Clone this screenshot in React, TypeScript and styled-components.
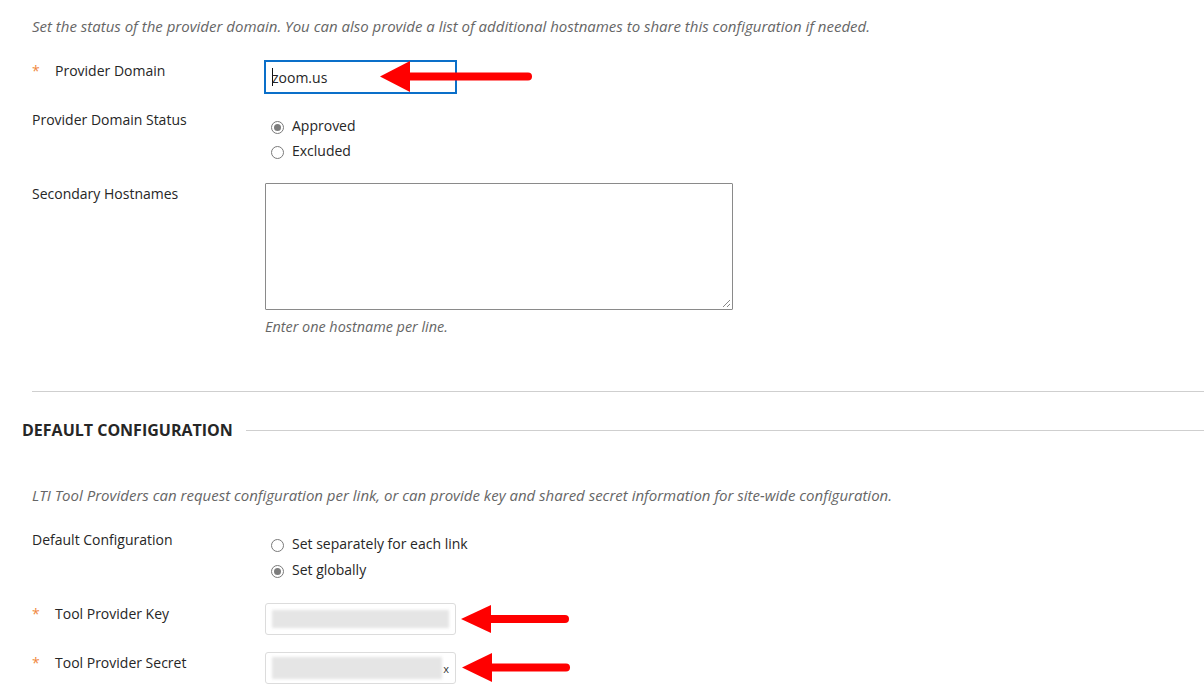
import React from 'react';
import styled, { createGlobalStyle } from 'styled-components';

const GlobalStyle = createGlobalStyle`
  html, body {
    margin: 0;
    padding: 0;
    background: #fff;
  }
  body {
    font-family: 'Open Sans', 'Noto Sans', sans-serif;
    font-size: 14px;
    color: #262626;
  }
`;

const Page = styled.div`
  padding: 16px 0 0 32px;
  width: 1172px;
  overflow: hidden;
`;

const Help = styled.p<{ $top?: number }>`
  margin: ${p => p.$top || 0}px 0 0;
  font-style: italic;
  font-size: 15px;
  line-height: 20px;
  color: #666;
`;

const Row = styled.div<{ $top: number }>`
  display: grid;
  grid-template-columns: 233px 1fr;
  margin-top: ${p => p.$top}px;
`;

const Label = styled.div`
  display: flex;
  line-height: 20px;
  padding-top: 1px;
`;

const Star = styled.span`
  width: 23px;
  color: #f0883e;
`;

const Control = styled.div`
  position: relative;
`;

const Field = styled.div<{ $focused?: boolean }>`
  box-sizing: border-box;
  width: 191px;
  height: 32px;
  border: 1px solid #dcdcdc;
  border-radius: 3px;
  display: flex;
  align-items: center;
  padding: 0 6px;
  ${p =>
    p.$focused &&
    `
    outline: 2px solid #0a6fc9;
    outline-offset: -1px;
    border-radius: 0;
    margin-top: 1px;
  `}
`;

const Caret = styled.span`
  display: inline-block;
  width: 1px;
  height: 18px;
  background: #111;
  margin-right: -1px;
`;

const Value = styled.span`
  color: #262626;
`;

const Blur = styled.span<{ $w: number; $h: number }>`
  display: block;
  width: ${p => p.$w}px;
  height: ${p => p.$h}px;
  background: #e5e5e5;
  filter: blur(1.5px);
`;

const Tail = styled.span`
  font-size: 11px;
  color: #333;
  margin-left: 1px;
`;

const RadioList = styled.div<{ $pad: number; $step: number }>`
  padding-top: ${p => p.$pad}px;
  padding-left: 6px;
  display: flex;
  flex-direction: column;
  & > label {
    height: ${p => p.$step}px;
  }
`;

const RadioItem = styled.label`
  display: flex;
  align-items: center;
  gap: 8px;
  line-height: 20px;
`;

const Dot = styled.span<{ $checked?: boolean }>`
  box-sizing: border-box;
  width: 13px;
  height: 13px;
  border-radius: 50%;
  border: 1px solid #7a7a7a;
  margin-top: 3px;
  display: flex;
  align-items: center;
  justify-content: center;
  &::after {
    content: '';
    width: 7px;
    height: 7px;
    border-radius: 50%;
    background: ${p => (p.$checked ? '#7d7d7d' : 'transparent')};
  }
`;

const TextArea = styled.div`
  position: relative;
  box-sizing: border-box;
  width: 468px;
  height: 127px;
  border: 1px solid #8a8a8a;
  border-radius: 1px;
`;

const Grip = styled.svg`
  position: absolute;
  right: 1px;
  bottom: 1px;
`;

const Hint = styled.div`
  margin-top: 7px;
  font-style: italic;
  font-size: 14.4px;
  line-height: 20px;
  color: #666;
`;

const Rule = styled.hr`
  margin: 54px 0 0;
  border: 0;
  border-top: 1px solid #cfcfcf;
`;

const SectionHead = styled.div`
  display: flex;
  align-items: center;
  gap: 13px;
  margin: 27px 0 0 -10px;
  &::after {
    content: '';
    flex: 1;
    border-top: 1px solid #cfcfcf;
  }
`;

const SectionTitle = styled.h2`
  margin: 0;
  font-size: 16px;
  font-weight: 700;
  line-height: 22px;
  color: #262626;
`;

const ArrowSvg = styled.svg<{ $left: number; $top: number }>`
  position: absolute;
  left: ${p => p.$left}px;
  top: ${p => p.$top}px;
`;

const Arrow = ({ left, top, len, head }: { left: number; top: number; len: number; head: number }) => (
  <ArrowSvg $left={left} $top={top} width={len + 4} height={head + 2}>
    <polygon points={`0,${head / 2 + 1} 30,1 30,${head + 1}`} fill="#ff0000" />
    <line
      x1={28}
      y1={head / 2 + 1}
      x2={len - 2}
      y2={head / 2 + 1}
      stroke="#ff0000"
      strokeWidth={8}
      strokeLinecap="round"
    />
  </ArrowSvg>
);

const Required = ({ children }: { children: React.ReactNode }) => (
  <Label>
    <Star>*</Star>
    {children}
  </Label>
);

const Radio = ({ checked, children }: { checked?: boolean; children: React.ReactNode }) => (
  <RadioItem>
    <Dot $checked={checked} />
    {children}
  </RadioItem>
);

const App = () => (
  <>
    <GlobalStyle />
    <Page>
      <Help>
        Set the status of the provider domain. You can also provide a list of additional hostnames to share this
        configuration if needed.
      </Help>

      <Row $top={24}>
        <Required>Provider Domain</Required>
        <Control>
          <Field $focused>
            <Caret />
            <Value>zoom.us</Value>
          </Field>
          <Arrow left={115} top={0} len={150} head={31} />
        </Control>
      </Row>

      <Row $top={16}>
        <Label>Provider Domain Status</Label>
        <RadioList $pad={4} $step={25}>
          <Radio checked>Approved</Radio>
          <Radio>Excluded</Radio>
        </RadioList>
      </Row>

      <Row $top={20}>
        <Label>Secondary Hostnames</Label>
        <div>
          <TextArea>
            <Grip width="10" height="10" viewBox="0 0 10 10">
              <line x1="9" y1="2" x2="2" y2="9" stroke="#888" strokeWidth="1" />
              <line x1="9" y1="6" x2="6" y2="9" stroke="#888" strokeWidth="1" />
            </Grip>
          </TextArea>
          <Hint>Enter one hostname per line.</Hint>
        </div>
      </Row>

      <Rule />

      <SectionHead>
        <SectionTitle>DEFAULT CONFIGURATION</SectionTitle>
      </SectionHead>

      <Help $top={44}>
        LTI Tool Providers can request configuration per link, or can provide key and shared secret information for
        site-wide configuration.
      </Help>

      <Row $top={24}>
        <Label>Default Configuration</Label>
        <RadioList $pad={2} $step={26}>
          <Radio>Set separately for each link</Radio>
          <Radio checked>Set globally</Radio>
        </RadioList>
      </Row>

      <Row $top={20}>
        <Required>Tool Provider Key</Required>
        <Control>
          <Field>
            <Blur $w={180} $h={18} />
          </Field>
          <Arrow left={196} top={1} len={106} head={28} />
        </Control>
      </Row>

      <Row $top={17}>
        <Required>Tool Provider Secret</Required>
        <Control>
          <Field>
            <Blur $w={173} $h={22} />
            <Tail>x</Tail>
          </Field>
          <Arrow left={197} top={0} len={106} head={29} />
        </Control>
      </Row>
    </Page>
  </>
);

export default App;
